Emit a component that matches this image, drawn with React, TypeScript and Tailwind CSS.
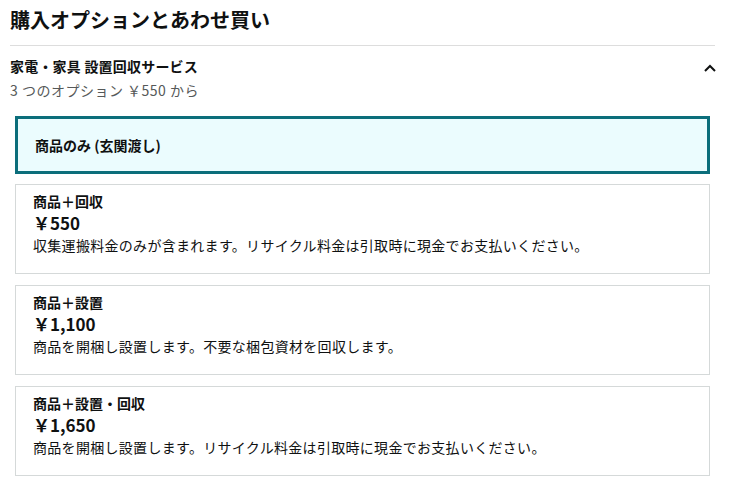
const options = [
  {
    title: '商品＋回収',
    price: '￥550',
    note: '収集運搬料金のみが含まれます。リサイクル料金は引取時に現金でお支払いください。',
  },
  {
    title: '商品＋設置',
    price: '￥1,100',
    note: '商品を開梱し設置します。不要な梱包資材を回収します。',
  },
  {
    title: '商品＋設置・回収',
    price: '￥1,650',
    note: '商品を開梱し設置します。リサイクル料金は引取時に現金でお支払いください。',
  },
]

export default function App() {
  return (
    <div
      className="w-[730px] h-[490px] bg-white text-[#0f1111] overflow-hidden"
      style={{ fontFamily: '"Noto Sans CJK JP", "Noto Sans", sans-serif' }}
    >
      <div className="pl-[10px] pr-[15px] pt-[5px]">
        <h1 className="text-[20px] font-bold leading-[30px]">購入オプションとあわせ買い</h1>
        <div className="mt-[10px] border-t border-[#dddddd]" />

        {/* service header */}
        <div className="flex items-start justify-between pt-[10px]">
          <div>
            <div className="text-[14px] font-bold leading-[20px] tracking-[0.2px]">家電・家具 設置回収サービス</div>
            <div className="text-[14px] leading-[22px] text-[#565959] mt-[3px] tracking-[0.5px]">
              3 つのオプション ￥550 から
            </div>
          </div>
          <svg width="12" height="8" viewBox="0 0 12 8" className="mt-[8px] mr-[-1px]">
            <path d="M1 7 L6 2 L11 7" fill="none" stroke="#0f1111" strokeWidth="2" />
          </svg>
        </div>
      </div>

      <div className="pl-[15px] pr-[20px] mt-[15px] flex flex-col gap-[10px]">
        <div className="h-[58px] border-[3px] border-[#0b6e7b] bg-[#ebfcfe] flex items-center pl-[17px]">
          <span className="text-[14px] font-bold">商品のみ (玄関渡し)</span>
        </div>
        <div className="flex flex-col gap-[11px]">
          {options.map((o) => (
            <div key={o.title} className="h-[90px] border border-[#d5d9d9] pl-[17px] pt-[5px]">
              <div className="text-[14px] font-bold leading-[22px]">{o.title}</div>
              <div className="text-[17px] font-bold leading-[22px]">{o.price}</div>
              <div className="text-[14px] leading-[22px] tracking-[0.3px]">{o.note}</div>
            </div>
          ))}
        </div>
      </div>
    </div>
  )
}
